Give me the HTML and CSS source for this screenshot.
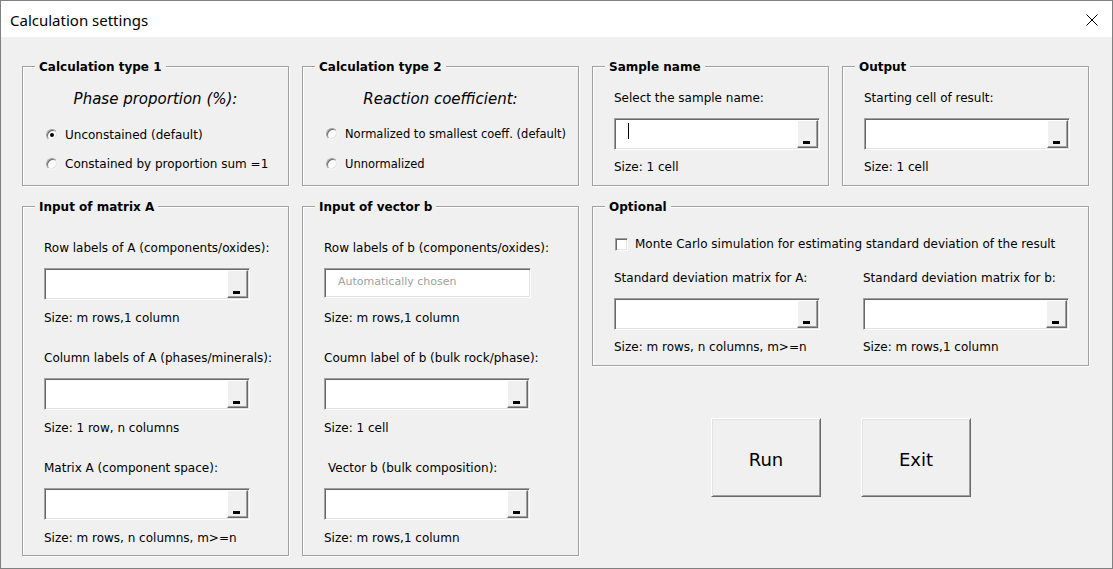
FILE: index.html
```html
<!DOCTYPE html>
<html>
<head>
<meta charset="utf-8">
<title>Calculation settings</title>
<link rel="stylesheet" href="styles.css">
</head>
<body>
<div class="window">
  <div class="titlebar">
    <span class="title">Calculation settings</span>
    <svg class="close" width="12" height="12" viewBox="0 0 12 12"><path d="M0.5 0.5 L11.5 11.5 M11.5 0.5 L0.5 11.5" stroke="#000" stroke-width="1" fill="none"/></svg>
  </div>
  <div class="content">
    <div class="row row-top">
      <div class="group g-type1">
        <span class="legend">Calculation type 1</span>
        <div class="heading">Phase proportion (%):</div>
        <div class="radios">
          <div class="radio-row"><span class="radio checked"></span><span>Unconstained (default)</span></div>
          <div class="radio-row"><span class="radio"></span><span>Constained by proportion sum =1</span></div>
        </div>
      </div>
      <div class="group g-type2">
        <span class="legend">Calculation type 2</span>
        <div class="heading">Reaction coefficient:</div>
        <div class="radios small">
          <div class="radio-row"><span class="radio"></span><span>Normalized to smallest coeff. (default)</span></div>
          <div class="radio-row"><span class="radio"></span><span>Unnormalized</span></div>
        </div>
      </div>
      <div class="group g-sample">
        <span class="legend">Sample name</span>
        <div class="field">
          <div class="label">Select the sample name:</div>
          <div class="refedit"><span class="caret"></span><span class="rbtn"><span class="glyph"></span></span></div>
          <div class="size">Size: 1 cell</div>
        </div>
      </div>
      <div class="group g-output">
        <span class="legend">Output</span>
        <div class="field">
          <div class="label">Starting cell of result:</div>
          <div class="refedit"><span class="rbtn"><span class="glyph"></span></span></div>
          <div class="size">Size: 1 cell</div>
        </div>
      </div>
    </div>
    <div class="row row-bottom">
      <div class="group g-matrix">
        <span class="legend">Input of matrix A</span>
        <div class="field">
          <div class="label">Row labels of A (components/oxides):</div>
          <div class="refedit"><span class="rbtn"><span class="glyph"></span></span></div>
          <div class="size">Size: m rows,1 column</div>
        </div>
        <div class="field">
          <div class="label">Column labels of A (phases/minerals):</div>
          <div class="refedit"><span class="rbtn"><span class="glyph"></span></span></div>
          <div class="size">Size: 1 row, n columns</div>
        </div>
        <div class="field">
          <div class="label">Matrix A (component space):</div>
          <div class="refedit"><span class="rbtn"><span class="glyph"></span></span></div>
          <div class="size">Size: m rows, n columns, m&gt;=n</div>
        </div>
      </div>
      <div class="group g-vector">
        <span class="legend">Input of vector b</span>
        <div class="field">
          <div class="label">Row labels of b (components/oxides):</div>
          <div class="textbox disabled">Automatically chosen</div>
          <div class="size">Size: m rows,1 column</div>
        </div>
        <div class="field">
          <div class="label">Coumn label of b (bulk rock/phase):</div>
          <div class="refedit"><span class="rbtn"><span class="glyph"></span></span></div>
          <div class="size">Size: 1 cell</div>
        </div>
        <div class="field">
          <div class="label indent">Vector b (bulk composition):</div>
          <div class="refedit"><span class="rbtn"><span class="glyph"></span></span></div>
          <div class="size">Size: m rows,1 column</div>
        </div>
      </div>
      <div class="rightcol">
        <div class="group g-optional">
          <span class="legend">Optional</span>
          <div class="check-row"><span class="checkbox"></span><span>Monte Carlo simulation for estimating standard deviation of the result</span></div>
          <div class="opt-cols">
            <div class="field">
              <div class="label">Standard deviation matrix for A:</div>
              <div class="refedit"><span class="rbtn"><span class="glyph"></span></span></div>
              <div class="size">Size: m rows, n columns, m&gt;=n</div>
            </div>
            <div class="field">
              <div class="label">Standard deviation matrix for b:</div>
              <div class="refedit"><span class="rbtn"><span class="glyph"></span></span></div>
              <div class="size">Size: m rows,1 column</div>
            </div>
          </div>
        </div>
        <div class="buttons">
          <button class="cmd">Run</button>
          <button class="cmd">Exit</button>
        </div>
      </div>
    </div>
  </div>
</div>
</body>
</html>
```
FILE: styles.css
```css
html, body {
  margin: 0;
  padding: 0;
  background: #f0f0f0;
}
body {
  font-family: "DejaVu Sans", sans-serif;
  font-size: 12px;
  color: #000;
}
.window {
  box-sizing: border-box;
  width: 1113px;
  height: 569px;
  border: 1px solid #808080;
  background: #f0f0f0;
  display: flex;
  flex-direction: column;
}
.titlebar {
  height: 36px;
  background: #fff;
  display: flex;
  align-items: center;
  justify-content: space-between;
  padding: 0 14px 0 9px;
  flex: none;
}
.title {
  font-family: "Noto Sans", sans-serif;
  font-size: 15px;
  color: #000;
  padding-top: 1px;
}
.close {
  display: block;
  margin-top: 1px;
}
.content {
  padding: 29px 0 0 21px;
}
.row {
  display: flex;
  gap: 13px;
  align-items: flex-start;
}
.row-bottom {
  margin-top: 20px;
}
.group {
  position: relative;
  box-sizing: border-box;
  border: 1px solid #a0a0a0;
  box-shadow: inset 1px 1px 0 #fff, 1px 1px 0 #fff;
  padding-left: 21px;
}
.legend {
  position: absolute;
  top: -8px;
  left: 12px;
  padding: 0 4px;
  background: #f0f0f0;
  font-weight: bold;
  line-height: 16px;
  white-space: nowrap;
}
.g-type1 { width: 267px; height: 120px; padding-top: 22px; padding-left: 23px; }
.g-type2 { width: 277px; height: 120px; padding-top: 22px; padding-left: 23px; }
.g-sample { width: 237px; height: 120px; padding-top: 23px; }
.g-output { width: 247px; height: 120px; padding-top: 23px; }
.g-matrix { width: 267px; height: 350px; padding-top: 33px; }
.g-vector { width: 277px; height: 350px; padding-top: 33px; }
.heading {
  font-style: italic;
  font-size: 15px;
  line-height: 20px;
  text-align: center;
  margin-left: -23px;
  white-space: nowrap;
}
.radios {
  margin-top: 18px;
  display: flex;
  flex-direction: column;
  gap: 13px;
}
.radios.small { font-size: 11.5px; margin-top: 17px; gap: 14px; }
.radio-row {
  display: flex;
  align-items: center;
  gap: 7px;
  line-height: 16px;
  white-space: nowrap;
}
.radio {
  box-sizing: border-box;
  width: 12px;
  height: 12px;
  border-radius: 50%;
  background: #fff;
  border: 1px solid;
  border-color: #a0a0a0 #f4f4f4 #f4f4f4 #a0a0a0;
  box-shadow: inset 1px 1px 0 #696969, inset -1px -1px 0 #e3e3e3;
  position: relative;
  flex: none;
}
.radio.checked::after {
  content: "";
  position: absolute;
  left: 3px;
  top: 3px;
  width: 4px;
  height: 4px;
  border-radius: 50%;
  background: #000;
}
.field {
  display: flex;
  flex-direction: column;
}
.field + .field { margin-top: 24px; }
.label {
  line-height: 16px;
  white-space: nowrap;
  margin-bottom: 12px;
}
.label.indent { padding-left: 4px; }
.size {
  line-height: 16px;
  white-space: nowrap;
  margin-top: 10px;
}
.g-sample .size, .g-output .size, .opt-cols .size { margin-top: 9px; }
.refedit {
  box-sizing: border-box;
  position: relative;
  width: 206px;
  height: 32px;
  background: #fff;
  border: 1px solid;
  border-color: #a0a0a0 #fff #fff #a0a0a0;
  box-shadow: inset 1px 1px 0 #696969, inset -1px -1px 0 #e3e3e3;
  display: flex;
  justify-content: flex-end;
  padding: 1px;
}
.caret {
  position: absolute;
  left: 13px;
  top: 4px;
  width: 1px;
  height: 16px;
  background: #000;
}
.rbtn {
  box-sizing: border-box;
  width: 21px;
  height: 100%;
  margin-left: auto;
  background: #f0f0f0;
  border-left: 1px solid #fff;
  border-top: 1px solid #fff;
  border-right: 1px solid #696969;
  border-bottom: 1px solid #696969;
  box-shadow: inset -1px -1px 0 #a0a0a0;
  position: relative;
}
.glyph {
  position: absolute;
  left: 5px;
  bottom: 3px;
  width: 7px;
  height: 3px;
  background: #000;
}
.textbox {
  box-sizing: border-box;
  width: 207px;
  height: 30px;
  background: #fff;
  border: 1px solid;
  border-color: #a0a0a0 #fff #fff #a0a0a0;
  box-shadow: inset 1px 1px 0 #696969, inset -1px -1px 0 #e3e3e3;
  font-size: 11px;
  line-height: 26px;
  padding-left: 13px;
}
.textbox.disabled { color: #a0a0a0; }
.textbox + .size { margin-top: 12px; }
.rightcol {
  display: flex;
  flex-direction: column;
}
.g-optional {
  width: 497px;
  height: 160px;
  padding-top: 29px;
}
.check-row {
  display: flex;
  align-items: center;
  gap: 7px;
  line-height: 16px;
  white-space: nowrap;
  margin-left: 1px;
}
.checkbox {
  box-sizing: border-box;
  width: 13px;
  height: 13px;
  background: #fff;
  border: 1px solid;
  border-color: #a0a0a0 #fff #fff #a0a0a0;
  box-shadow: inset 1px 1px 0 #696969, inset -1px -1px 0 #e3e3e3;
  flex: none;
}
.opt-cols {
  margin-top: 18px;
  display: grid;
  grid-template-columns: 249px auto;
}
.opt-cols .field + .field { margin-top: 0; }
.buttons {
  margin-top: 52px;
  padding-left: 119px;
  display: flex;
  gap: 40px;
}
.cmd {
  box-sizing: border-box;
  width: 110px;
  height: 79px;
  background: #f0f0f0;
  font-family: "DejaVu Sans", sans-serif;
  font-size: 18px;
  color: #000;
  border: 1px solid;
  border-color: #fff #696969 #696969 #fff;
  box-shadow: inset 1px 1px 0 #e3e3e3, inset -1px -1px 0 #a0a0a0;
  padding: 3px 0 0 0;
  margin: 0;
}
```
